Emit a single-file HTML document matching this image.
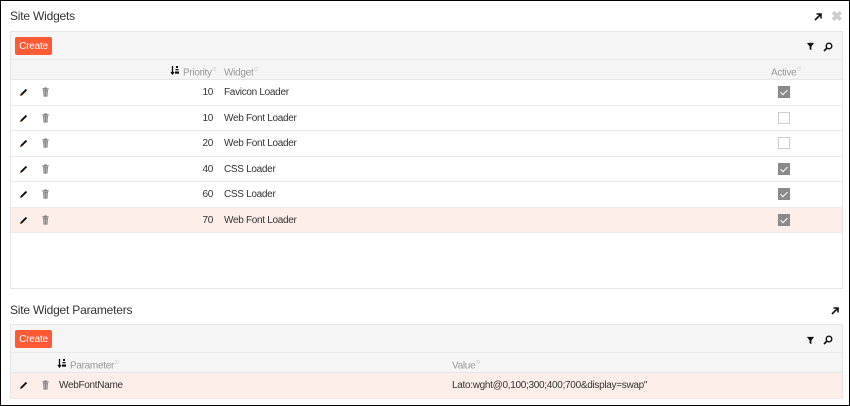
<!DOCTYPE html>
<html><head><style>
*{box-sizing:border-box;margin:0;padding:0}
body{width:850px;height:406px;background:#fff;font-family:"Liberation Sans",sans-serif;font-size:10px;color:#333;position:relative;overflow:hidden}
.frame{position:absolute;left:0;top:0;width:850px;height:406px;border:1px solid #000}
.title{position:absolute;left:10px;font-size:12px;color:#333;letter-spacing:-0.2px}
.panel{position:absolute;left:10px;width:833px;border:1px solid #e6e6e6}
.tb{height:28px;background:#f5f5f5;border-bottom:1px solid #e8e8e8;position:relative}
.btn{position:absolute;left:4px;top:5px;width:37px;height:18px;background:#ff5a36;color:#fff;font-size:10px;display:flex;align-items:center;justify-content:center;border-radius:2px;letter-spacing:-0.2px}
.hd{height:20px;background:#f5f5f5;border-bottom:1px solid #e6e6e6;position:relative;color:#999}
.row{height:25.5px;border-bottom:1px solid #ececec;position:relative}
.hl{background:#fdeee9}
.a{position:absolute;top:0;line-height:26px;letter-spacing:-0.3px}
.hd .a{line-height:20px}
sup{font-size:6px;color:#ccc}
.cb{position:absolute;left:767px;top:6px;width:12px;height:12px;border:1px solid #ccc;background:#fff}
.cb.on{background:#8a8a8a;border-color:#8a8a8a}
.cb.on:after{content:"";position:absolute;left:3px;top:1px;width:3px;height:6px;border:solid #fff;border-width:0 1.5px 1.5px 0;transform:rotate(45deg)}
</style></head><body>
<div class="frame"></div>
<svg width="0" height="0" style="position:absolute"><defs>
<symbol id="pen" viewBox="0 0 12 12"><path d="M2 10 L3 7.5 L8.5 2 L10 3.5 L4.5 9 Z" fill="#111"/><path d="M2 10 L2.6 8.4 L3.6 9.4Z" fill="#c60"/></symbol>
<symbol id="bin" viewBox="0 0 12 12"><rect x="2.5" y="2" width="7" height="1.2" fill="#777"/><rect x="4.8" y="1" width="2.4" height="1.2" fill="#777"/><path d="M3.3 3.6h5.4l-.5 7.4h-4.4z" fill="#888"/><path d="M5 4.5v5.5M7 4.5v5.5" stroke="#ccc" stroke-width=".6"/></symbol>
<symbol id="funnel" viewBox="0 0 10 10"><path d="M1 1h8L6 5v4L4 8V5z" fill="#111"/></symbol>
<symbol id="mag" viewBox="0 0 10 10"><circle cx="6" cy="4" r="2.8" fill="none" stroke="#111" stroke-width="1.4"/><path d="M4 6L1 9" stroke="#111" stroke-width="1.6"/></symbol>
<symbol id="arr" viewBox="0 0 10 10"><path d="M2 8L8 2M3.5 2H8V6.5" fill="none" stroke="#111" stroke-width="1.6"/></symbol>
<symbol id="sort" viewBox="0 0 10 10"><path d="M2.5 1v8M1 7l1.5 2L4 7" fill="none" stroke="#111" stroke-width="1.3"/><rect x="6" y="1" width="2" height="2" fill="#111"/><rect x="5.5" y="4" width="3" height="1.3" fill="#111"/><rect x="5" y="6.5" width="4" height="2.2" fill="#111"/></symbol>
</defs></svg>

<div class="title" style="top:9px">Site Widgets</div>
<svg style="position:absolute;left:813px;top:12px" width="10" height="10"><use href="#arr"/></svg>
<div style="position:absolute;left:831px;top:8px;font-size:14px;color:#ccc;font-weight:bold">✖</div>

<div class="panel" style="top:31px;height:258px">
 <div class="tb"><div class="btn">Create</div>
  <svg style="position:absolute;left:795px;top:10px" width="9" height="9"><use href="#funnel"/></svg>
  <svg style="position:absolute;left:812px;top:10px" width="10" height="10"><use href="#mag"/></svg>
 </div>
 <div class="hd">
  <svg style="position:absolute;left:159px;top:5px" width="10" height="10"><use href="#sort"/></svg>
  <span class="a" style="left:172px">Priority<sup>⊙</sup></span>
  <span class="a" style="left:213px">Widget<sup>⊙</sup></span>
  <span class="a" style="left:760px">Active<sup>⊙</sup></span>
 </div>
 <div class="row"><svg class="a" style="left:7px;top:7px" width="11" height="11"><use href="#pen"/></svg><svg class="a" style="left:29px;top:6px" width="11" height="12"><use href="#bin"/></svg><span class="a" style="left:150px;width:52px;text-align:right">10</span><span class="a" style="left:213px">Favicon Loader</span><div class="cb on"></div></div>
 <div class="row"><svg class="a" style="left:7px;top:7px" width="11" height="11"><use href="#pen"/></svg><svg class="a" style="left:29px;top:6px" width="11" height="12"><use href="#bin"/></svg><span class="a" style="left:150px;width:52px;text-align:right">10</span><span class="a" style="left:213px">Web Font Loader</span><div class="cb"></div></div>
 <div class="row"><svg class="a" style="left:7px;top:7px" width="11" height="11"><use href="#pen"/></svg><svg class="a" style="left:29px;top:6px" width="11" height="12"><use href="#bin"/></svg><span class="a" style="left:150px;width:52px;text-align:right">20</span><span class="a" style="left:213px">Web Font Loader</span><div class="cb"></div></div>
 <div class="row"><svg class="a" style="left:7px;top:7px" width="11" height="11"><use href="#pen"/></svg><svg class="a" style="left:29px;top:6px" width="11" height="12"><use href="#bin"/></svg><span class="a" style="left:150px;width:52px;text-align:right">40</span><span class="a" style="left:213px">CSS Loader</span><div class="cb on"></div></div>
 <div class="row"><svg class="a" style="left:7px;top:7px" width="11" height="11"><use href="#pen"/></svg><svg class="a" style="left:29px;top:6px" width="11" height="12"><use href="#bin"/></svg><span class="a" style="left:150px;width:52px;text-align:right">60</span><span class="a" style="left:213px">CSS Loader</span><div class="cb on"></div></div>
 <div class="row hl"><svg class="a" style="left:7px;top:7px" width="11" height="11"><use href="#pen"/></svg><svg class="a" style="left:29px;top:6px" width="11" height="12"><use href="#bin"/></svg><span class="a" style="left:150px;width:52px;text-align:right">70</span><span class="a" style="left:213px">Web Font Loader</span><div class="cb on"></div></div>
</div>

<div class="title" style="top:303px">Site Widget Parameters</div>
<svg style="position:absolute;left:830px;top:306px" width="10" height="10"><use href="#arr"/></svg>

<div class="panel" style="top:324px;height:75px;border-bottom:none">
 <div class="tb"><div class="btn">Create</div>
  <svg style="position:absolute;left:795px;top:11px" width="9" height="9"><use href="#funnel"/></svg>
  <svg style="position:absolute;left:812px;top:10px" width="10" height="10"><use href="#mag"/></svg>
 </div>
 <div class="hd">
  <svg style="position:absolute;left:46px;top:5px" width="10" height="10"><use href="#sort"/></svg>
  <span class="a" style="left:59px">Parameter<sup>⊙</sup></span>
  <span class="a" style="left:441px">Value<sup>⊙</sup></span>
 </div>
 <div class="row hl"><svg class="a" style="left:7px;top:7px" width="11" height="11"><use href="#pen"/></svg><svg class="a" style="left:29px;top:6px" width="11" height="12"><use href="#bin"/></svg><span class="a" style="left:48px">WebFontName</span><span class="a" style="left:441px">Lato:wght@0,100;300;400;700&amp;display=swap"</span></div>
</div>
</body></html>
